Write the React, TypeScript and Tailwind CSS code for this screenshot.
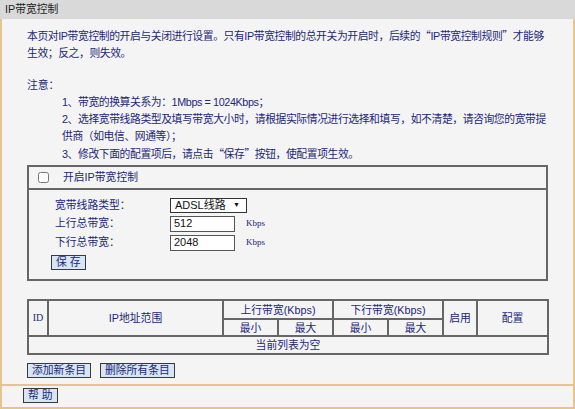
import React, { useState } from 'react';

const font = { fontFamily: '"Liberation Sans", "Noto Sans CJK SC", sans-serif' };
const serif = { fontFamily: '"Liberation Serif", serif' };
const cjk = { fontFamily: '"Noto Sans CJK SC", sans-serif' };

function Q({ children }: { children: React.ReactNode }) {
  return (
    <>
      <span style={cjk}>“</span>
      {children}
      <span style={cjk}>”</span>
    </>
  );
}

function Btn({ children }: { children: React.ReactNode }) {
  return (
    <button className="h-[15px] px-[4px] border border-[#3a3a3a] bg-[#d6e6f4] text-[10.8px] leading-[13px] text-[#22267a]">
      {children}
    </button>
  );
}

export default function App() {
  const [enabled, setEnabled] = useState(false);
  const [up, setUp] = useState('512');
  const [down, setDown] = useState('2048');

  const cell = 'border-2 border-[#666] font-normal p-0';

  return (
    <div className="w-[575px] h-[409px] bg-[#f4f4f4] text-[#22267a] text-[10.8px]" style={font}>
      {/* Title */}
      <div className="h-[19px] bg-[#d9d9d9] pl-[5px] leading-[19px] text-[#222]">IP带宽控制</div>

      <div className="h-[390px] border-x-2 border-b-2 border-[#e6c38f] flex flex-col">
        <div className="flex-1 pl-[25px] pr-[25px] pt-[8px]">
          <p className="leading-[17px] tracking-[-0.4px]">
            本页对IP带宽控制的开启与关闭进行设置。只有IP带宽控制的总开关为开启时，后续的<Q>IP带宽控制规则</Q>才能够生效；反之，则失效。
          </p>
          <p className="leading-[17px] mt-[15px]">注意：</p>
          <div className="pl-[35px] tracking-[-0.4px]">
            <p className="leading-[17px]">1、带宽的换算关系为：1Mbps = 1024Kbps；</p>
            <p className="leading-[17px]">
              2、选择宽带线路类型及填写带宽大小时，请根据实际情况进行选择和填写，如不清楚，请咨询您的宽带提供商（如电信、网通等）；
            </p>
            <p className="leading-[17px]">
              3、修改下面的配置项后，请点击<Q>保存</Q>按钮，使配置项生效。
            </p>
          </div>

          {/* Settings box */}
          <div className="mt-[2px] border-2 border-[#666] h-[116px]">
            <div className="h-[23px] border-b-2 border-[#666] flex items-center pl-[9px]">
              <input
                type="checkbox"
                checked={enabled}
                onChange={(e) => setEnabled(e.target.checked)}
                className="w-[11px] h-[11px] m-0"
              />
              <span className="ml-[14px]">开启IP带宽控制</span>
            </div>
            <div className="pl-[26px] pt-[6px]">
              <div className="flex items-center h-[18px]">
                <span className="w-[115px]">宽带线路类型：</span>
                <div className="w-[77px] h-[15px] border border-[#333] bg-white flex items-center justify-between pl-[4px] pr-[6px] text-[11px] text-[#111]">
                  <span>ADSL线路</span>
                  <span className="text-[7px]">▼</span>
                </div>
              </div>
              <div className="flex items-center h-[19px]">
                <span className="w-[115px]">上行总带宽：</span>
                <input
                  value={up}
                  onChange={(e) => setUp(e.target.value)}
                  className="w-[65px] h-[16px] border border-[#555] bg-white px-[3px] text-[11px] text-[#111] outline-none"
                />
                <span className="ml-[11px] text-[9px]" style={serif}>Kbps</span>
              </div>
              <div className="flex items-center h-[19px]">
                <span className="w-[115px]">下行总带宽：</span>
                <input
                  value={down}
                  onChange={(e) => setDown(e.target.value)}
                  className="w-[65px] h-[16px] border border-[#555] bg-white px-[3px] text-[11px] text-[#111] outline-none"
                />
                <span className="ml-[11px] text-[9px]" style={serif}>Kbps</span>
              </div>
              <div className="-ml-[4px] mt-[2px]">
                <Btn>保 存</Btn>
              </div>
            </div>
          </div>

          {/* Rules table */}
          <table className="mt-[18px] w-[522px] border-collapse border-2 border-[#666] text-center leading-[14px]">
            <thead>
              <tr className="h-[19px]">
                <th rowSpan={2} className={`w-[20px] ${cell} text-[10px]`} style={serif}>ID</th>
                <th rowSpan={2} className={`w-[175px] ${cell}`}>IP地址范围</th>
                <th colSpan={2} className={cell}>上行带宽(Kbps)</th>
                <th colSpan={2} className={cell}>下行带宽(Kbps)</th>
                <th rowSpan={2} className={`w-[34px] ${cell}`}>启用</th>
                <th rowSpan={2} className={cell}>配置</th>
              </tr>
              <tr className="h-[17px]">
                <th className={`w-[55px] ${cell}`}>最小</th>
                <th className={`w-[55px] ${cell}`}>最大</th>
                <th className={`w-[55px] ${cell}`}>最小</th>
                <th className={`w-[55px] ${cell}`}>最大</th>
              </tr>
            </thead>
            <tbody>
              <tr className="h-[18px]">
                <td colSpan={8} className={cell}>当前列表为空</td>
              </tr>
            </tbody>
          </table>

          <div className="mt-[8px] flex gap-[9px]">
            <Btn>添加新条目</Btn>
            <Btn>删除所有条目</Btn>
          </div>
        </div>

        <div className="h-[23px] border-t-2 border-[#e6c38f] pl-[21px] pt-[1px]">
          <Btn>帮 助</Btn>
        </div>
      </div>
    </div>
  );
}
